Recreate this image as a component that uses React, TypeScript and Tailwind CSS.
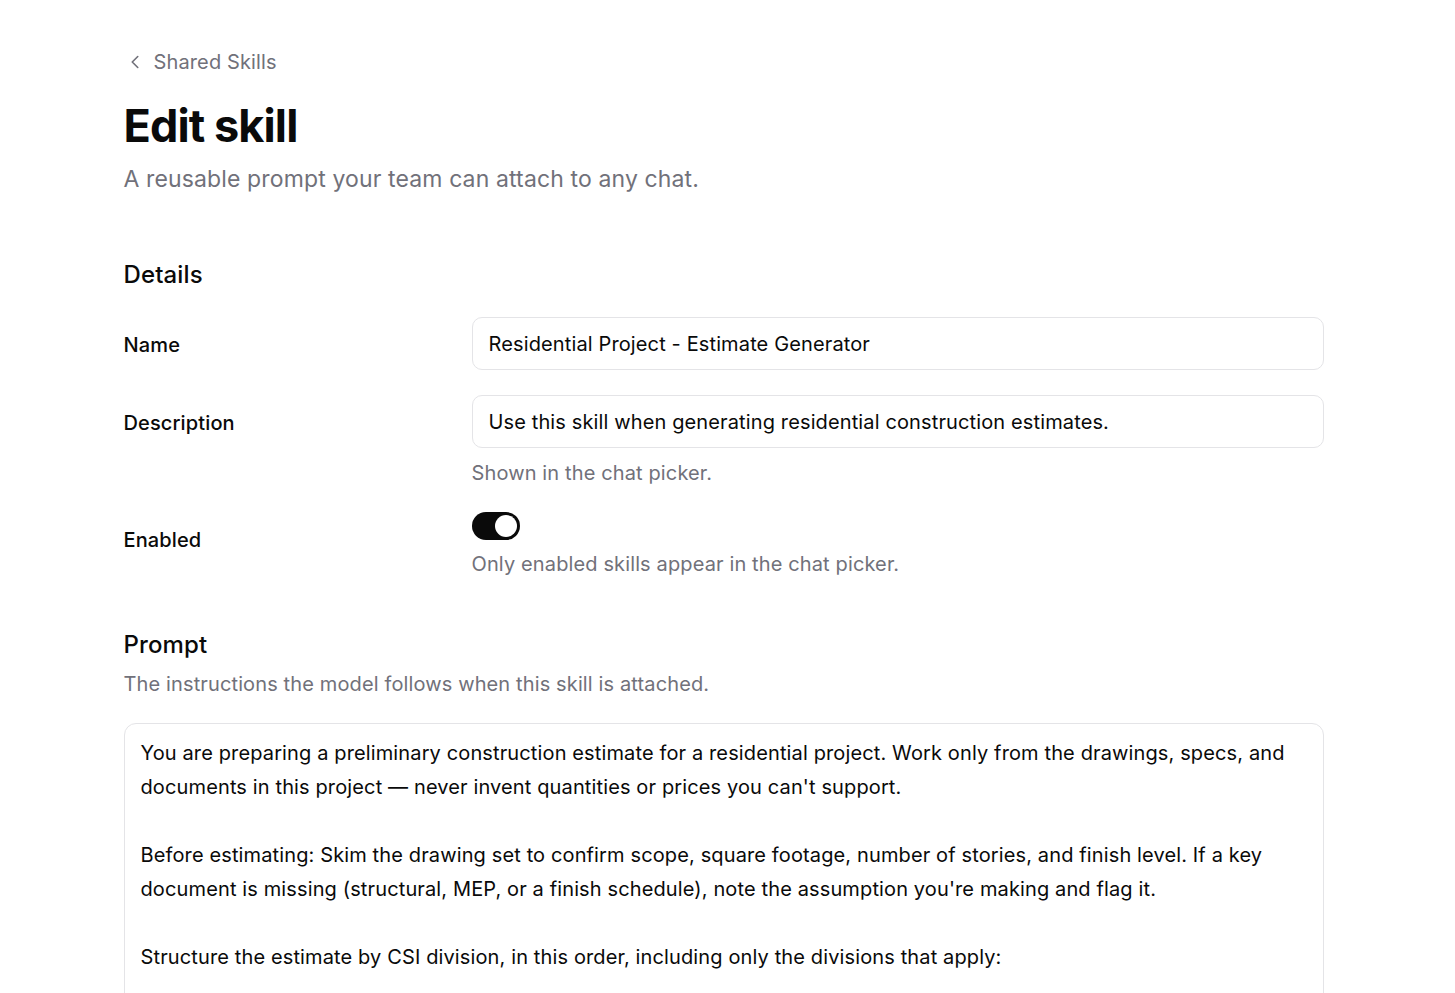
import { ChevronLeft } from 'lucide-react';

const prompt = `You are preparing a preliminary construction estimate for a residential project. Work only from the drawings, specs, and documents in this project — never invent quantities or prices you can't support.

Before estimating: Skim the drawing set to confirm scope, square footage, number of stories, and finish level. If a key document is missing (structural, MEP, or a finish schedule), note the assumption you're making and flag it.

Structure the estimate by CSI division, in this order, including only the divisions that apply:

01 General Requirements
03 Concrete
06 Wood, Plastics, and Composites
07 Thermal and Moisture Protection
08 Openings
09 Finishes`;

function Row({ label, children }: { label: string; children: React.ReactNode }) {
    return (
        <div className="grid grid-cols-[348px_1fr]">
            <div className="pt-[14px] text-xl leading-7 font-medium text-[#0a0a0a]">{label}</div>
            <div>{children}</div>
        </div>
    );
}

export default function App() {
    return (
        <div className="min-h-screen bg-white font-['Inter',sans-serif] tracking-[0.008em] text-[#0a0a0a]">
            <div className="mx-auto max-w-[1208px] pr-2 pt-12 pb-16">
                <a href="#" className="flex items-center gap-[8px] text-xl leading-7 text-[#71717a]">
                    <ChevronLeft size={22} strokeWidth={1.75} />
                    <span>Shared Skills</span>
                </a>

                <h1 className="mt-[22px] text-[45px] leading-[56px] font-bold tracking-[-0.02em]">Edit skill</h1>
                <p className="mt-[11px] text-[23px] leading-7 text-[#71717a]">
                    A reusable prompt your team can attach to any chat.
                </p>

                <h2 className="mt-[66px] text-2xl leading-8 font-medium">Details</h2>

                <div className="mt-[26px] flex flex-col gap-[25px]">
                    <Row label="Name">
                        <div className="flex h-[53px] items-center rounded-[10px] border border-[#e4e4e7] px-4 text-xl">
                            Residential Project - Estimate Generator
                        </div>
                    </Row>
                    <Row label="Description">
                        <div className="flex h-[53px] items-center rounded-[10px] border border-[#e4e4e7] px-4 text-xl">
                            Use this skill when generating residential construction estimates.
                        </div>
                        <p className="mt-[11px] text-xl leading-7 text-[#71717a]">Shown in the chat picker.</p>
                    </Row>
                    <Row label="Enabled">
                        <button className="flex h-7 w-12 items-center justify-end rounded-full bg-[#0a0a0a] p-[3px]">
                            <span className="h-[22px] w-[22px] rounded-full bg-white" />
                        </button>
                        <p className="mt-[10px] text-xl leading-7 text-[#71717a]">
                            Only enabled skills appear in the chat picker.
                        </p>
                    </Row>
                </div>

                <h2 className="mt-[51px] text-2xl leading-8 font-medium">Prompt</h2>
                <p className="mt-[9px] text-xl leading-7 text-[#71717a]">
                    The instructions the model follows when this skill is attached.
                </p>

                <div className="mt-[25px] rounded-xl border border-[#e4e4e7] px-4 pt-[12px] pb-4 text-xl leading-[34px] whitespace-pre-wrap">
                    {prompt}
                </div>
            </div>
        </div>
    );
}
